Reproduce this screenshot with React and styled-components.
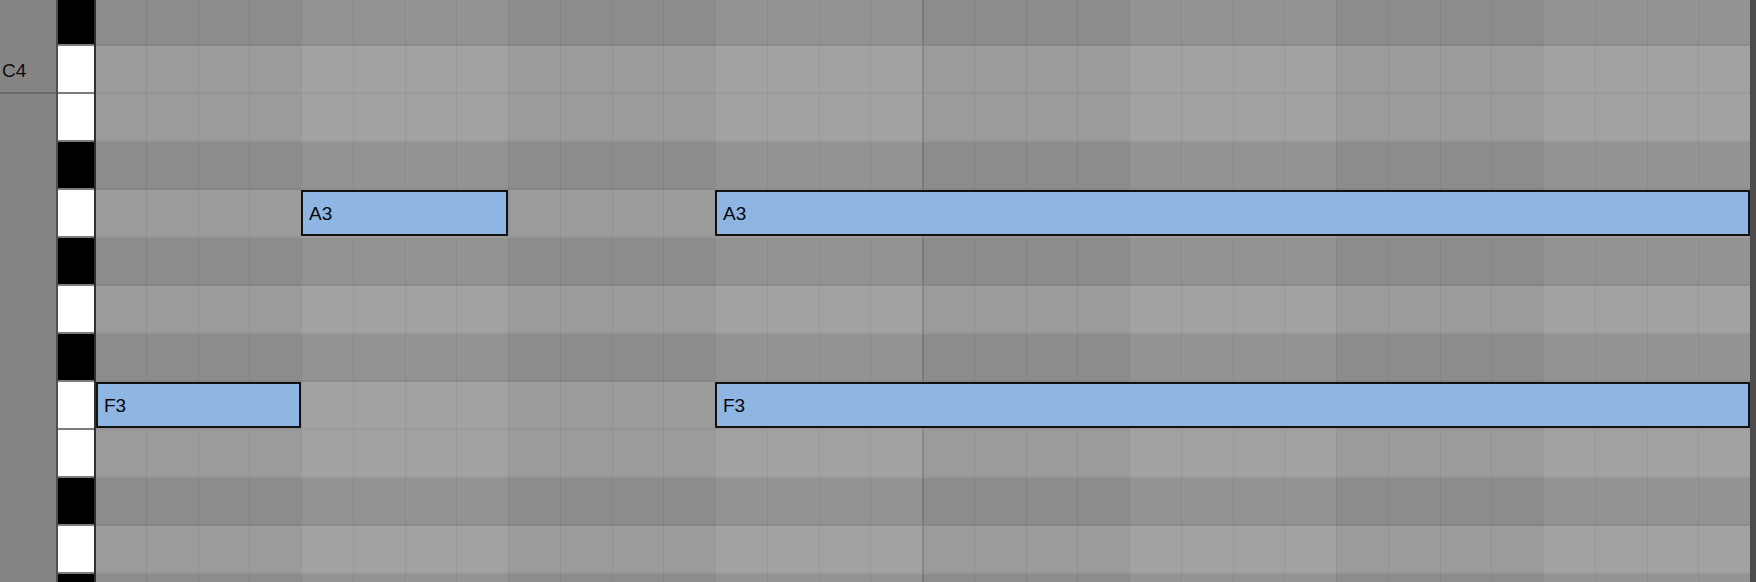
import React from 'react'
import styled, { createGlobalStyle } from 'styled-components';

const GlobalStyle = createGlobalStyle`
  html, body {
    margin: 0;
    padding: 0;
    overflow: hidden;
    background: #858585;
  }
  * { box-sizing: border-box; }
`;

const Window = styled.div`
  width: 1756px;
  height: 582px;
  overflow: hidden;
  display: flex;
  font-family: "Liberation Sans", Arial, sans-serif;
`;

const Scroller = styled.div`
  flex: 1;
  display: flex;
  margin-top: -2px;
  align-self: flex-start;
`;

const Gutter = styled.div`
  width: 56px;
  background: #858585;
  display: flex;
  flex-direction: column;
`;

const GutterRow = styled.div`
  height: 48px;
  display: flex;
  align-items: center;
  padding: 4px 0 0 2px;
  font-size: 19px;
  color: #0d0d0d;
  border-bottom: 2px solid ${p => (p.$marked ? '#6a6a6a' : 'transparent')};
`;

const Keys = styled.div`
  width: 40px;
  border-left: 2px solid #505050;
  border-right: 2px solid #303030;
  background: #7c7c7c;
  display: flex;
  flex-direction: column;
`;

const Key = styled.div`
  height: 46px;
  margin-bottom: 2px;
  background: ${p => (p.$black ? '#000' : '#fff')};
`;

const Grid = styled.div`
  flex: 1;
  display: flex;
  flex-direction: column;
`;

const Row = styled.div`
  display: grid;
  grid-template-columns: 49.75fr repeat(31, 51.75fr);
  height: 48px;
`;

const shade = (black, odd) => {
  if (black) return odd ? '#939393' : '#8c8c8c';
  return odd ? '#a2a2a2' : '#9b9b9b';
};

const Cell = styled.div`
  grid-row: 1;
  height: 48px;
  background: ${p => shade(p.$black, p.$odd)};
  border-left: ${p =>
    p.$bar ? '2px solid rgba(0,0,0,0.13)' : p.$first ? 'none' : '1px solid rgba(0,0,0,0.055)'};
  border-bottom: 2px solid rgba(0,0,0,0.045);
`;

const Note = styled.div`
  grid-row: 1;
  height: 46px;
  background: #8fb5e3;
  border: 2px solid #111;
  display: flex;
  align-items: center;
  padding: 1px 0 0 6px;
  font-size: 19px;
  color: #080808;
  z-index: 1;
`;

const Scrollbar = styled.div`
  width: 6px;
  height: 582px;
  background: #4c4c4c;
`;

const rows = [
  { name: 'C#4', black: true },
  { name: 'C4', black: false, label: true },
  { name: 'B3', black: false },
  { name: 'A#3', black: true },
  { name: 'A3', black: false },
  { name: 'G#3', black: true },
  { name: 'G3', black: false },
  { name: 'F#3', black: true },
  { name: 'F3', black: false },
  { name: 'E3', black: false },
  { name: 'D#3', black: true },
  { name: 'D3', black: false },
  { name: 'C#3', black: true },
];

const notes = [
  { pitch: 'A3', start: 4, end: 8 },
  { pitch: 'A3', start: 12, end: 32 },
  { pitch: 'F3', start: 0, end: 4 },
  { pitch: 'F3', start: 12, end: 32 },
];

const COLS = 32;

const App = () => {
  return (
    <Window>
      <GlobalStyle />
      <Scroller>
        <Gutter>
          {rows.map(r => (
            <GutterRow key={r.name} $marked={r.label}>
              {r.label ? r.name : null}
            </GutterRow>
          ))}
        </Gutter>
        <Keys>
          {rows.map(r => (
            <Key key={r.name} $black={r.black} />
          ))}
        </Keys>
        <Grid>
          {rows.map(r => (
            <Row key={r.name}>
              {Array.from({ length: COLS }, (_, i) => (
                <Cell
                  key={i}
                  style={{ gridColumn: i + 1 }}
                  $black={r.black}
                  $odd={Math.floor(i / 4) % 2 === 1}
                  $first={i === 0}
                  $bar={i === 16}
                />
              ))}
              {notes
                .filter(n => n.pitch === r.name)
                .map(n => (
                  <Note key={n.start} style={{ gridColumn: `${n.start + 1} / ${n.end + 1}` }}>
                    {n.pitch}
                  </Note>
                ))}
            </Row>
          ))}
        </Grid>
      </Scroller>
      <Scrollbar />
    </Window>
  )
}

export default App
